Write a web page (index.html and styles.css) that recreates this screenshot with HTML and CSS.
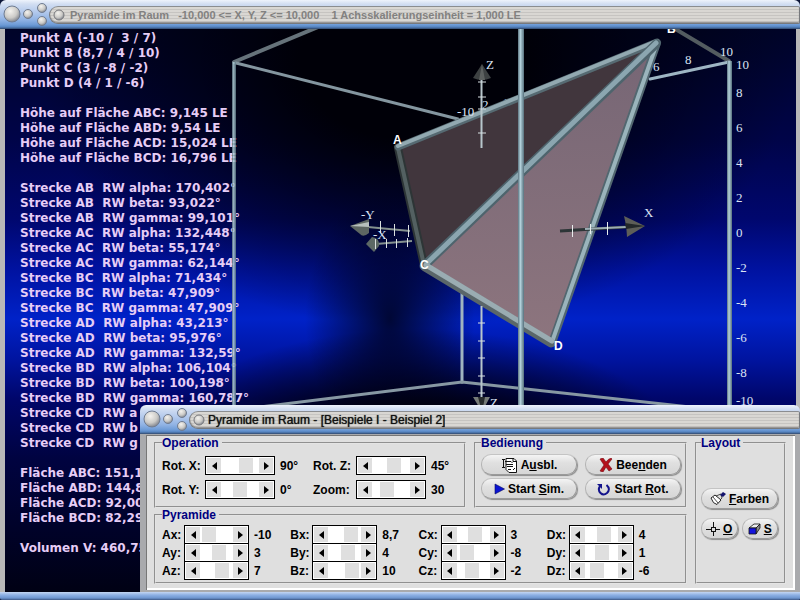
FILE: index.html
```html
<!DOCTYPE html>
<html lang="de">
<head>
<meta charset="utf-8">
<title>Pyramide im Raum</title>
<link rel="stylesheet" href="styles.css">
</head>
<body>
<svg class="defs" aria-hidden="true">
  <defs>
    <radialGradient id="knob" cx="40%" cy="32%" r="65%">
      <stop offset="0" stop-color="#f4f2ee"/><stop offset=".65" stop-color="#cbcac7"/><stop offset="1" stop-color="#8c8f96"/>
    </radialGradient>
    <symbol id="knobs" viewBox="0 0 49 29">
      <g fill="url(#knob)" stroke="#6f7c92" stroke-width="1">
        <circle cx="12" cy="14" r="8"/><circle cx="28" cy="14" r="4.5"/>
        <circle cx="42" cy="8" r="4.5"/><circle cx="42" cy="21" r="4.5"/>
      </g>
    </symbol>
    <symbol id="knob-small" viewBox="0 0 12 12"><circle cx="6" cy="6" r="5" fill="url(#knob)" stroke="#77787c"/></symbol>
  </defs>
</svg>

<main class="window window-main">
  <header class="titlebar">
    <svg class="knobs"><use href="#knobs"/></svg>
    <div class="title-pill">
      <svg class="knob"><use href="#knob-small"/></svg>
      <h1 class="title title-inactive">Pyramide im Raum   -10,000 &lt;= X, Y, Z &lt;= 10,000    1 Achsskalierungseinheit = 1,000 LE</h1>
    </div>
  </header>
  <div class="scene">
    <pre class="readout">Punkt A (-10 /  3 / 7)
Punkt B (8,7 / 4 / 10)
Punkt C (3 / -8 / -2)
Punkt D (4 / 1 / -6)

Höhe auf Fläche ABC: 9,145 LE
Höhe auf Fläche ABD: 9,54 LE
Höhe auf Fläche ACD: 15,024 LE
Höhe auf Fläche BCD: 16,796 LE

Strecke AB  RW alpha: 170,402°
Strecke AB  RW beta: 93,022°
Strecke AB  RW gamma: 99,101°
Strecke AC  RW alpha: 132,448°
Strecke AC  RW beta: 55,174°
Strecke AC  RW gamma: 62,144°
Strecke BC  RW alpha: 71,434°
Strecke BC  RW beta: 47,909°
Strecke BC  RW gamma: 47,909°
Strecke AD  RW alpha: 43,213°
Strecke AD  RW beta: 95,976°
Strecke AD  RW gamma: 132,59°
Strecke BD  RW alpha: 106,104°
Strecke BD  RW beta: 100,198°
Strecke BD  RW gamma: 160,787°
Strecke CD  RW a
Strecke CD  RW b
Strecke CD  RW g

Fläche ABC: 151,1
Fläche ABD: 144,8
Fläche ACD: 92,00
Fläche BCD: 82,29

Volumen V: 460,75</pre>
    <svg class="drawing" viewBox="5 29 791 563" preserveAspectRatio="xMinYMin slice" role="img" aria-label="Pyramide ABCD im Koordinatensystem">
      <defs>
        <linearGradient id="face" x1="0" y1="0" x2="0" y2="1"><stop offset="0" stop-color="#766675"/><stop offset="1" stop-color="#8d757e"/></linearGradient>
        <linearGradient id="post" x1="0" y1="0" x2="1" y2="0"><stop offset="0" stop-color="#5c7480"/><stop offset=".4" stop-color="#b4d2dc"/><stop offset="1" stop-color="#56707c"/></linearGradient>
      </defs>
      <!-- bounding cube, rear edges -->
      <g fill="none" stroke-linecap="round">
        <path d="M234 62L318 27" stroke="#66737b" stroke-width="4"/>
        <path d="M236 63L458 119" stroke="#8496a0" stroke-width="3"/>
        <path d="M672 27L729 61" stroke="#535c60" stroke-width="4"/>
        <path d="M729 62L650 79" stroke="#9eb6c4" stroke-width="3"/>
        <path d="M462 290V382" stroke="#9fb4c0" stroke-width="3"/>
        <path d="M260 407L462 382L690 407" stroke="#8798a3" stroke-width="3"/>
      </g>
      <rect x="232" y="62" width="4" height="531" fill="url(#post)" opacity=".85"/>
      <rect x="727" y="61" width="5" height="532" fill="url(#post)"/>
      <!-- scale marks partly hidden by the pyramid -->
      <g class="axis-text">
        <text x="482" y="109">2</text><text x="503" y="107">6</text><text x="653" y="71">6</text>
      </g>
      <!-- faces -->
      <path d="M398 146L658 42L424 266Z" fill="#41363d"/>
      <path d="M658 42L424 266L552 344Z" fill="url(#face)"/>
      <!-- pyramid edges: dark body, lit centre -->
      <g fill="none" stroke-linecap="round">
        <path d="M398 148L424 265" stroke="#2d3536" stroke-width="8"/>
        <path d="M398 148L424 265" stroke="#536061" stroke-width="4"/>
        <path d="M398 147L657 42" stroke="#566a72" stroke-width="7"/>
        <path d="M398 146L657 41" stroke="#92a9b1" stroke-width="4"/>
        <path d="M552 343L657 43" stroke="#526770" stroke-width="8"/>
        <path d="M552 342L657 43" stroke="#9ab4bc" stroke-width="4"/>
        <path d="M424 266L656 44" stroke="#4e646d" stroke-width="9"/>
        <path d="M424 266L656 43" stroke="#8ba6b0" stroke-width="5"/>
        <path d="M425 267L551 343" stroke="#5a6669" stroke-width="9"/>
        <path d="M426 265L552 341" stroke="#9aacb2" stroke-width="5"/>
      </g>
      <!-- Z axis -->
      <g stroke="#b7c6cc" fill="none">
        <path d="M481.500 78V148M481.500 306V400" stroke-width="2"/>
        <path d="M478 82h8M478 97h8M478 109h8M478 133h8M478 323h7M478 341h7M478 358h7M478 376h7M478 393h7" stroke="#d7dfe2"/>
      </g>
      <path d="M482 64L491 78Q482 82 473 78Z" fill="#3d4142"/>
      <path d="M482 64L485 80L479 80Z" fill="#5d6160"/>
      <path d="M473 397L490 397L482 412Z" fill="#767b78"/>
      <path d="M478 397L482 412L485 397Z" fill="#282c2c"/>
      <!-- horizontal axes -->
      <path d="M368 227L410 231M376 244L412 241" stroke="#84918f" stroke-width="2"/>
      <path d="M350 226L369 219V233Q363 238 360 234Z" fill="#5d6662"/>
      <path d="M350 226L369 222V227Z" fill="#b7c0bd"/>
      <path d="M366 244L372 237Q380 238 379 246L374 252Z" fill="#5c6965"/>
      <path d="M380.500 221v12M394.500 224v12M408.500 225v12M375.500 239v10M386.500 239v9M396.500 239v9M407.500 238v9" stroke="#d9dfdf"/>
      <path d="M560 231L626 227" stroke="#2c3537" stroke-width="3"/>
      <path d="M585 229L626 227" stroke="#9badb3" stroke-width="2"/>
      <path d="M572.500 225v12M590.500 224v10M607.500 222v13" stroke="#e8eded"/>
      <path d="M645 226L624 216Q627 226 627 237Z" fill="#5d5e58"/>
      <path d="M645 226L625 223L626 229Z" fill="#23282a"/>
      <rect x="518" y="27" width="6" height="566" fill="url(#post)"/>
      <g class="axis-text">
        <text x="486" y="69">Z</text><text x="644" y="217">X</text>
        <text x="361" y="219">-Y</text><text x="373" y="239">-X</text><text x="490" y="407">Z</text>
        <text x="457" y="116">-10</text>
        <text x="685" y="64">8</text><text x="720" y="56">10</text>
        <text x="736" y="69">10</text><text x="736" y="97">8</text><text x="736" y="132">6</text>
        <text x="736" y="167">4</text><text x="736" y="202">2</text><text x="736" y="237">0</text>
        <text x="736" y="272">-2</text><text x="736" y="307">-4</text><text x="736" y="342">-6</text>
        <text x="736" y="377">-8</text><text x="736" y="405">-10</text>
      </g>
      <g class="corner-text">
        <text x="393" y="144">A</text><text x="667" y="33">B</text>
        <text x="420" y="269">C</text><text x="554" y="350">D</text>
      </g>
    </svg>
  </div>
  <div class="bottom-edge"></div>
</main>

<section class="window window-panel">
  <header class="titlebar">
    <svg class="knobs"><use href="#knobs"/></svg>
    <div class="title-pill">
      <svg class="knob"><use href="#knob-small"/></svg>
      <h2 class="title">Pyramide im Raum - [Beispiele I - Beispiel 2]</h2>
    </div>
  </header>
  <form class="panel">
    <fieldset class="group group-operation">
      <legend>Operation</legend>
      <div class="field"><label for="rx">Rot. X:</label><span class="scroller"><button type="button" class="prev" aria-label="Rot. X kleiner"></button><input id="rx" type="range" min="-180" max="180" value="90"><button type="button" class="next" aria-label="Rot. X größer"></button></span><output for="rx">90°</output></div>
      <div class="field"><label for="rz">Rot. Z:</label><span class="scroller"><button type="button" class="prev" aria-label="Rot. Z kleiner"></button><input id="rz" type="range" min="-180" max="180" value="45"><button type="button" class="next" aria-label="Rot. Z größer"></button></span><output for="rz">45°</output></div>
      <div class="field"><label for="ry">Rot. Y:</label><span class="scroller"><button type="button" class="prev" aria-label="Rot. Y kleiner"></button><input id="ry" type="range" min="-180" max="180" value="0"><button type="button" class="next" aria-label="Rot. Y größer"></button></span><output for="ry">0°</output></div>
      <div class="field"><label for="zoom">Zoom:</label><span class="scroller"><button type="button" class="prev" aria-label="Zoom kleiner"></button><input id="zoom" type="range" min="0" max="90" value="30"><button type="button" class="next" aria-label="Zoom größer"></button></span><output for="zoom">30</output></div>
    </fieldset>

    <fieldset class="group group-bedienung">
      <legend>Bedienung</legend>
      <button type="button" class="pill">
        <svg width="17" height="16" viewBox="0 0 17 16" fill="#fff" stroke="#111"><path d="M5 1.500H13L15.500 4V15.500H8L5 12.500Z"/><path d="M1 2.500H4M1 10.500H4M2.500 2.500V10.500M4 4.500H10L11.500 6M5 7.500H12M6 9.500H12M7 12.500H10M12 2V4.500H15M12 13L14 11" fill="none"/></svg>
        <span>A<u>u</u>sbl.</span></button>
      <button type="button" class="pill">
        <svg width="14" height="14" viewBox="0 0 14 14"><path d="M1 1L4 0L7 4Q9 1 12 0L13 1L9 6L13 11L10 13L7 9L4 14L1 13L5 7Z" fill="#b3121c" stroke="#780a12" stroke-width=".6"/></svg>
        <span>Bee<u>n</u>den</span></button>
      <button type="button" class="pill">
        <svg width="11" height="12" viewBox="0 0 11 12"><path d="M1 1L10.500 6L1 11Z" fill="#0a14d2" stroke="#06085e" stroke-width=".6"/></svg>
        <span>Start <u>S</u>im.</span></button>
      <button type="button" class="pill">
        <svg width="14" height="14" viewBox="0 0 14 14"><path d="M3 4Q.5 8 3.500 11T10 11Q14 7 9.500 3" fill="none" stroke="#14148c" stroke-width="2"/><path d="M0 2H5V7Z" fill="#14148c"/></svg>
        <span>Start <u>R</u>ot.</span></button>
    </fieldset>

    <fieldset class="group group-pyramide">
      <legend>Pyramide</legend>
      <div class="field"><label for="ax">Ax:</label><span class="scroller"><button type="button" class="prev" aria-label="Ax kleiner"></button><input id="ax" type="range" min="-13" max="13" value="-10"><button type="button" class="next" aria-label="Ax größer"></button></span><output for="ax">-10</output></div>
      <div class="field"><label for="bx">Bx:</label><span class="scroller"><button type="button" class="prev" aria-label="Bx kleiner"></button><input id="bx" type="range" min="-13" max="13" step="0.1" value="8.7"><button type="button" class="next" aria-label="Bx größer"></button></span><output for="bx">8,7</output></div>
      <div class="field"><label for="cx">Cx:</label><span class="scroller"><button type="button" class="prev" aria-label="Cx kleiner"></button><input id="cx" type="range" min="-13" max="13" value="3"><button type="button" class="next" aria-label="Cx größer"></button></span><output for="cx">3</output></div>
      <div class="field"><label for="dx">Dx:</label><span class="scroller"><button type="button" class="prev" aria-label="Dx kleiner"></button><input id="dx" type="range" min="-13" max="13" value="4"><button type="button" class="next" aria-label="Dx größer"></button></span><output for="dx">4</output></div>
      <div class="field"><label for="ay">Ay:</label><span class="scroller"><button type="button" class="prev" aria-label="Ay kleiner"></button><input id="ay" type="range" min="-13" max="13" value="3"><button type="button" class="next" aria-label="Ay größer"></button></span><output for="ay">3</output></div>
      <div class="field"><label for="by">By:</label><span class="scroller"><button type="button" class="prev" aria-label="By kleiner"></button><input id="by" type="range" min="-13" max="13" value="4"><button type="button" class="next" aria-label="By größer"></button></span><output for="by">4</output></div>
      <div class="field"><label for="cy">Cy:</label><span class="scroller"><button type="button" class="prev" aria-label="Cy kleiner"></button><input id="cy" type="range" min="-13" max="13" value="-8"><button type="button" class="next" aria-label="Cy größer"></button></span><output for="cy">-8</output></div>
      <div class="field"><label for="dy">Dy:</label><span class="scroller"><button type="button" class="prev" aria-label="Dy kleiner"></button><input id="dy" type="range" min="-13" max="13" value="1"><button type="button" class="next" aria-label="Dy größer"></button></span><output for="dy">1</output></div>
      <div class="field"><label for="az">Az:</label><span class="scroller"><button type="button" class="prev" aria-label="Az kleiner"></button><input id="az" type="range" min="-13" max="13" value="7"><button type="button" class="next" aria-label="Az größer"></button></span><output for="az">7</output></div>
      <div class="field"><label for="bz">Bz:</label><span class="scroller"><button type="button" class="prev" aria-label="Bz kleiner"></button><input id="bz" type="range" min="-13" max="13" value="10"><button type="button" class="next" aria-label="Bz größer"></button></span><output for="bz">10</output></div>
      <div class="field"><label for="cz">Cz:</label><span class="scroller"><button type="button" class="prev" aria-label="Cz kleiner"></button><input id="cz" type="range" min="-13" max="13" value="-2"><button type="button" class="next" aria-label="Cz größer"></button></span><output for="cz">-2</output></div>
      <div class="field"><label for="dz">Dz:</label><span class="scroller"><button type="button" class="prev" aria-label="Dz kleiner"></button><input id="dz" type="range" min="-13" max="13" value="-6"><button type="button" class="next" aria-label="Dz größer"></button></span><output for="dz">-6</output></div>
    </fieldset>

    <fieldset class="group group-layout">
      <legend>Layout</legend>
      <button type="button" class="pill pill-wide">
        <svg width="16" height="14" viewBox="0 0 16 14"><path d="M1 6L5 3L11 8L7 12.500Q3 12 1 6Z" fill="#fff" stroke="#222"/><path d="M3 5L8 11M6 4L11 2L12 6L10 8" fill="none" stroke="#222" stroke-width=".8"/><path d="M10 3L13 0L16 2L13 5Z" fill="#14146e"/></svg>
        <span><u>F</u>arben</span></button>
      <button type="button" class="pill">
        <svg width="14" height="14" viewBox="0 0 14 14" fill="none" stroke="#111"><path d="M7.500 0V5M7.500 10V14M0 7.500H5M10 7.500H14"/><rect x="5.500" y="5.500" width="4" height="4"/></svg>
        <span><u>O</u></span></button>
      <button type="button" class="pill">
        <svg width="13" height="12" viewBox="0 0 13 12" stroke="#111" stroke-width=".8"><path d="M1 5L6 1H12L8 5Z" fill="#eee"/><path d="M8 5L12 1V5L8 11Z" fill="#888"/><path d="M1 5H8V11H1Z" fill="#1414dc"/></svg>
        <span><u>S</u></span></button>
    </fieldset>
  </form>
  <div class="bottom-edge"></div>
</section>
</body>
</html>
```
FILE: styles.css
```css
* { box-sizing: border-box; }

body {
  margin: 0;
  height: 100vh;
  position: relative;
  overflow: hidden;
  background: #0a1438;
  font: bold 12px/14px "Liberation Sans", sans-serif;
  color: #000;
}

.defs { position: absolute; width: 0; height: 0; }

/* window chrome */
.window {
  display: grid;
  grid-template-rows: 29px 1fr 8px;
  border-radius: 6px 6px 2px 2px;
  overflow: hidden;
}
.window-main { height: 100%; }
.window-panel {
  position: absolute;
  left: 140px;
  right: 0;
  bottom: 0;
}

.titlebar {
  display: flex;
  align-items: center;
  background: linear-gradient(#eef3fc 0, #d2def2 4px, #b3c9ec 12px, #8fb2e4 20px, #6c9ad6 25px, #5584c0 27px, #31486c 29px);
}
.knobs { width: 49px; height: 29px; flex: none; }
.title-pill {
  flex: 1;
  min-width: 0;
  height: 18px;
  display: flex;
  align-items: center;
  gap: 3px;
  padding-left: 3px;
  border: 1px solid #77797c;
  border-top-color: #8b8d90;
  border-radius: 9px 2px 2px 9px;
  background: repeating-linear-gradient(#d9d7d3 0, #d9d7d3 2px, #c6c4c1 2px, #c6c4c1 3px);
  box-shadow: inset 0 -1px 1px #909090;
}
.knob { width: 12px; height: 12px; flex: none; }
.title {
  margin: 0;
  font-size: 12px;
  font-weight: normal;
  line-height: 16px;
  white-space: pre;
  overflow: hidden;
  color: #111;
  text-shadow: 0 0 1px currentColor;
}
.title-inactive {
  padding-left: 2px;
  font-size: 11px;
  font-weight: bold;
  color: #828180;
  text-shadow: none;
}

.bottom-edge { background: linear-gradient(#c4d6f2, #8db0e4 3px, #6e96d0 6px, #3c5684); }

/* 3D scene */
.scene {
  position: relative;
  min-height: 0;
  overflow: hidden;
  border: solid #b8b8b8;
  border-width: 0 4px 0 5px;
  background:
    radial-gradient(ellipse 85px 130px at 385px 290px, #000010c8 0, #00001000 100%),
    radial-gradient(ellipse 380px 270px at 410px 30px, #000008 30%, #00000800 100%),
    radial-gradient(ellipse 270px 130px at 410px 430px, #000008 35%, #00000800 100%),
    linear-gradient(#000428 0, #000448 110px, #00076e 190px, #0012a0 240px, #0022c8 290px, #0014a0 330px, #00066a 370px, #000340 430px, #000114 563px);
}
.readout {
  margin: 0;
  padding: 2px 0 0 15px;
  font: bold 12px/15px "DejaVu Sans", sans-serif;
  color: #e6cdf6;
}
.drawing {
  position: absolute;
  inset: 0;
  width: 100%;
  height: 100%;
}
.axis-text { font: 13px "Liberation Serif", serif; fill: #dbe3f4; }
.corner-text { font: bold 12px "Liberation Sans", sans-serif; fill: #fff; }

/* control panel */
.panel {
  display: grid;
  grid-template-columns: 312fr 213fr 91fr;
  grid-template-rows: auto auto;
  column-gap: 8px;
  padding: 1px 9px 6px 8px;
  border: solid #a9aaad;
  border-width: 1px 5px 2px 6px;
  background: #dfdfdf;
  box-shadow: inset 1px 1px #777, inset -2px -2px #fff;
}
.group {
  min-width: 0;
  margin: 0;
  padding: 0 6px;
  border: 2px groove #e4e4e4;
}
legend { padding: 0 3px 0 0; color: #000080; }
.group-operation {
  display: grid;
  grid-template-columns: 151fr 145fr;
  align-content: start;
  row-gap: 5px;
  padding-top: 6px;
  padding-bottom: 7px;
}
.group-bedienung {
  display: grid;
  grid-template-columns: 1fr 1fr;
  align-content: start;
  gap: 3px 8px;
  padding: 4px 4px 0 5px;
}
.group-pyramide {
  grid-column: 1 / 3;
  display: grid;
  grid-template-columns: repeat(4, 1fr);
  padding: 3px 10px 3px 6px;
}
.group-layout {
  grid-column: 3;
  grid-row: 1 / 3;
  display: grid;
  grid-template-columns: 1fr 1fr;
  align-content: start;
  gap: 9px 4px;
  padding: 38px 6px 0 4px;
}

.field { display: flex; align-items: center; }
.field label { width: 43px; white-space: nowrap; }
.field output { padding-left: 5px; }
.group-pyramide .field { height: 18px; align-items: flex-start; }
.group-pyramide label { width: 22px; }
.group-pyramide label,
.group-pyramide output { padding-top: 3px; }
.group-pyramide .scroller { width: 65px; }

.scroller {
  flex: none;
  display: flex;
  width: 70px;
  height: 19px;
  padding: 1px;
  border: 1px solid #000;
  background: #fff;
}
.scroller button {
  flex: none;
  display: grid;
  place-items: center;
  width: 14px;
  padding: 0;
  border: 0;
  background: #dfdfdf;
}
.scroller button::before {
  content: "";
  border: solid transparent;
  border-width: 4px 0;
}
.scroller .prev::before { border-right: 5px solid #000; }
.scroller .next::before { border-left: 5px solid #000; }
.scroller input {
  appearance: none;
  flex: 1;
  min-width: 0;
  height: 15px;
  margin: 0;
  background: #fff;
}
.scroller input::-webkit-slider-thumb {
  appearance: none;
  width: 14px;
  height: 15px;
  background: #dfdfdf;
}

.pill {
  display: flex;
  align-items: center;
  justify-content: center;
  gap: 3px;
  height: 21px;
  padding: 0 4px;
  border: 1px solid #9a9a9a;
  border-top-color: #c4c4c4;
  border-left-color: #b4b4b4;
  border-radius: 10px;
  background: linear-gradient(#f4f4f4, #e0e0e0 40%, #d6d6d6);
  box-shadow: 1px 1px 1px #8c8c8c;
  font: inherit;
  color: #000;
}
.pill svg { flex: none; }
.pill-wide { grid-column: 1 / 3; }
```
